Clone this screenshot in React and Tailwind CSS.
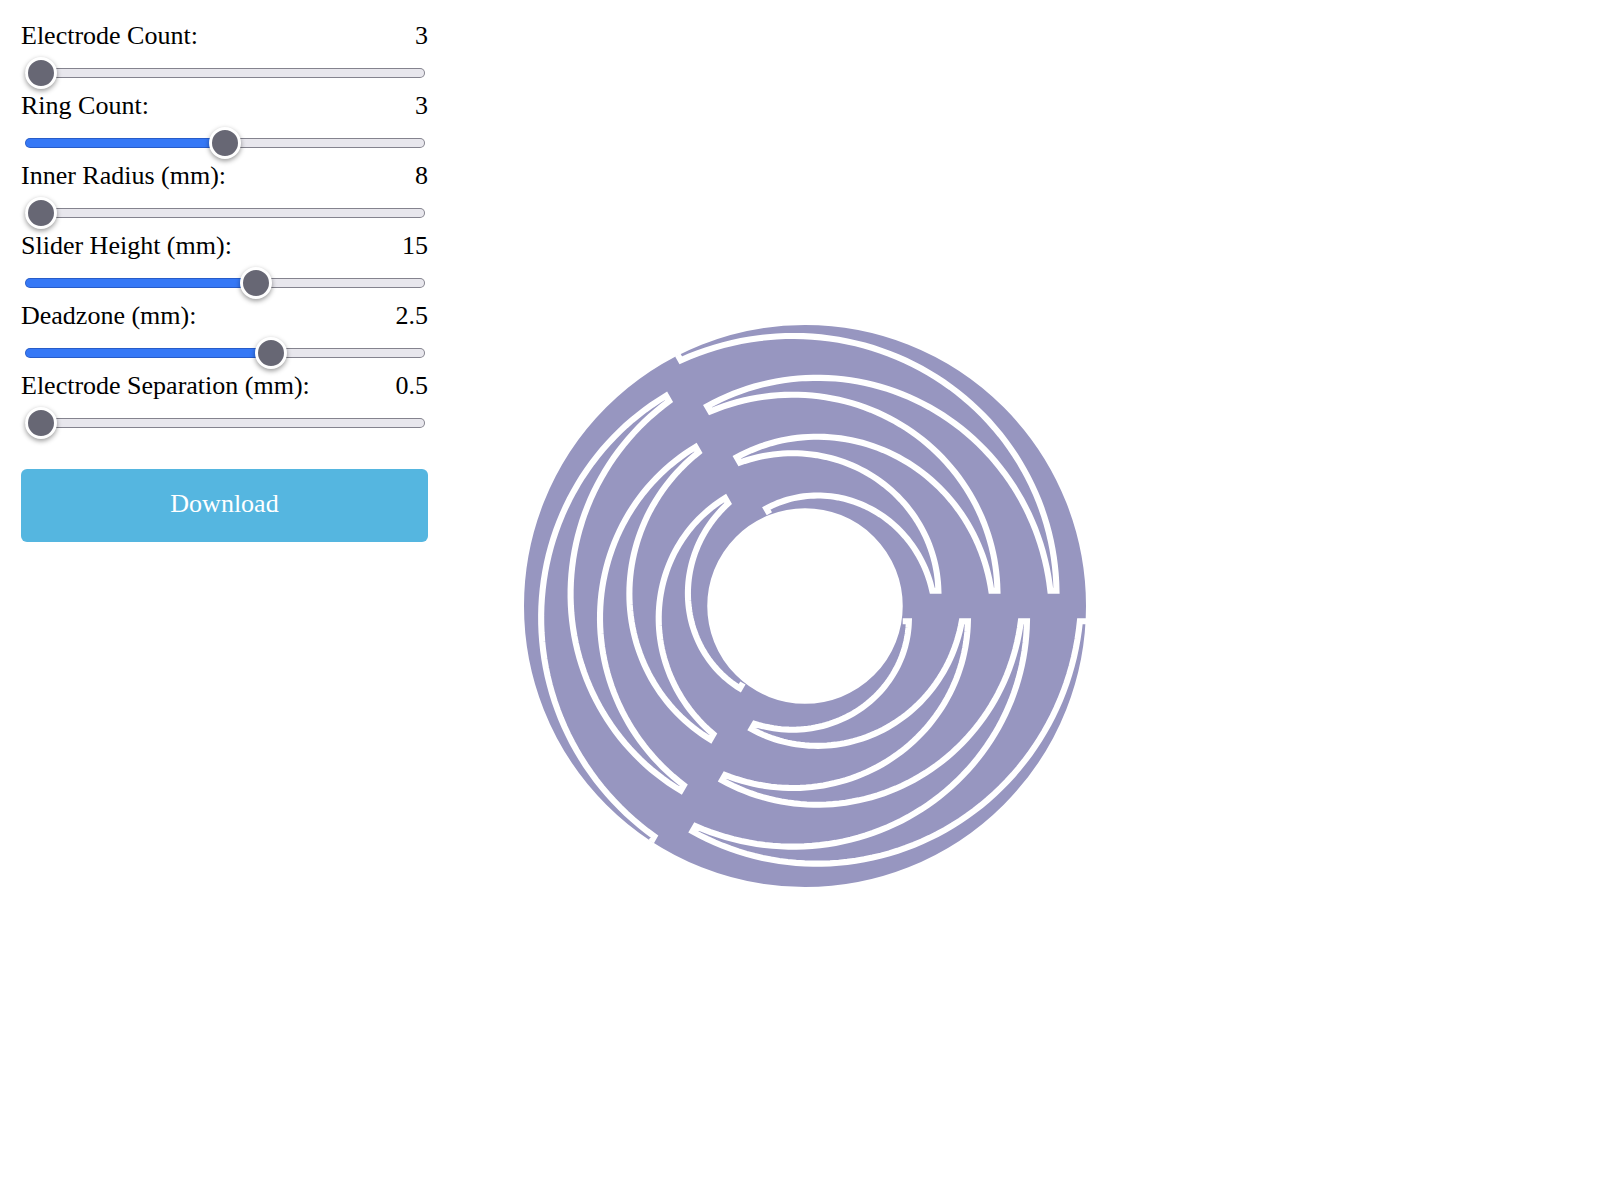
import React, { useState } from 'react';

const CONTROLS = [
  { id: 'electrodes', label: 'Electrode Count:', min: 3, max: 8, step: 1 },
  { id: 'rings', label: 'Ring Count:', min: 1, max: 5, step: 1 },
  { id: 'innerRadius', label: 'Inner Radius (mm):', min: 8, max: 20, step: 1 },
  { id: 'height', label: 'Slider Height (mm):', min: 8, max: 20, step: 1 },
  { id: 'deadzone', label: 'Deadzone (mm):', min: 0, max: 4, step: 0.5 },
  { id: 'separation', label: 'Electrode Separation (mm):', min: 0.5, max: 2, step: 0.1 },
];

const DEFAULTS = {
  electrodes: 3,
  rings: 3,
  innerRadius: 8,
  height: 15,
  deadzone: 2.5,
  separation: 0.5,
};

const CURVE_STEPS = 60;

// --- Two Layers: Fill Inside The Border, Darker Shade Under The Border ---
const trackBackground = (ratio) => {
  const stop = `calc(16px + (100% - 32px) * ${ratio})`;
  const layer = (on, off, box) =>
    `linear-gradient(to right, ${on} ${ratio ? stop : '0'}, ${off} ${ratio ? stop : '0'}) ${box}`;

  return [
    layer('#3578f6', '#e8e7ed', 'padding-box'),
    layer('#285cc8', '#84838e', 'border-box'),
  ].join(', ');
};

const SliderControl = ({ id, label, min, max, step, value, onChange }) => (
  <div>
    <div className="flex justify-between text-[26px] leading-[30px]">
      <label htmlFor={id}>{label}</label>
      <output htmlFor={id}>{value}</output>
    </div>
    <div className="flex pt-[17px] pr-[3px] pb-[13px] pl-1">
      <input
        id={id}
        type="range"
        min={min}
        max={max}
        step={step}
        value={value}
        onChange={(e) => onChange(id, Number(e.target.value))}
        style={{ background: trackBackground((value - min) / (max - min)) }}
        className="h-[10px] w-full cursor-pointer appearance-none rounded-full border border-transparent [&::-webkit-slider-runnable-track]:-mx-px [&::-webkit-slider-runnable-track]:h-2 [&::-webkit-slider-thumb]:-mt-3 [&::-webkit-slider-thumb]:size-8 [&::-webkit-slider-thumb]:appearance-none [&::-webkit-slider-thumb]:rounded-full [&::-webkit-slider-thumb]:border-3 [&::-webkit-slider-thumb]:border-white [&::-webkit-slider-thumb]:bg-[#676774] [&::-webkit-slider-thumb]:shadow-[0_2px_5px_rgba(0,0,0,0.4)]"
      />
    </div>
  </div>
);

// --- Zigzag Gap Between Two Neighbouring Electrodes, In Millimetres ---
const gapPath = ({ electrodes, rings, innerRadius, height, deadzone, separation }) => {
  const angle = (2 * Math.PI) / electrodes;
  const half = separation / 2;
  const pitch = (height - separation) / rings;
  const base = innerRadius + half;

  const startPoint = (r) => [r, deadzone / 2];
  const endPoint = (r) => [
    r * Math.cos(angle) + (deadzone / 2) * Math.sin(angle),
    r * Math.sin(angle) - (deadzone / 2) * Math.cos(angle),
  ];

  // The radius changes evenly with the angle from one point to the other
  const spiral = ([x1, y1], [x2, y2]) => {
    const r1 = Math.hypot(x1, y1);
    const r2 = Math.hypot(x2, y2);
    const a1 = Math.atan2(y1, x1);
    const a2 = Math.atan2(y2, x2);
    return Array.from({ length: CURVE_STEPS + 1 }, (_, i) => {
      const t = i / CURVE_STEPS;
      const r = r1 + (r2 - r1) * t;
      const a = a1 + (a2 - a1) * t;
      return [r * Math.cos(a), r * Math.sin(a)];
    });
  };

  const points = [endPoint(innerRadius)];
  for (let i = 0; i < rings; i++) {
    const low = base + i * pitch;
    const mid = low + pitch / 2;
    const high = low + pitch;
    points.push(
      ...spiral(endPoint(low + half), startPoint(mid - half)),
      ...spiral(startPoint(mid + half), endPoint(high - half))
    );
  }
  points.push(endPoint(innerRadius + height));

  return 'M' + points.map(([x, y]) => `${x.toFixed(3)} ${(-y).toFixed(3)}`).join('L');
};

const TouchWheel = ({ params }) => {
  const { electrodes, innerRadius, height, separation } = params;
  const outer = innerRadius + height;
  const d = gapPath(params);

  return (
    <svg
      viewBox={`${-outer} ${-outer} ${outer * 2} ${outer * 2}`}
      className="mt-[31px] w-[562px]"
      role="img"
      aria-label="Touch wheel preview"
    >
      <circle r={innerRadius + height / 2} fill="none" stroke="#9796c0" strokeWidth={height} />
      {Array.from({ length: electrodes }, (_, i) => (
        <path
          key={i}
          d={d}
          transform={`rotate(${(360 / electrodes) * i})`}
          fill="none"
          stroke="white"
          strokeWidth={separation}
        />
      ))}
    </svg>
  );
};

const App = () => {
  const [params, setParams] = useState(DEFAULTS);

  const handleChange = (id, value) => {
    setParams((prev) => ({ ...prev, [id]: value }));
  };

  return (
    <div className="grid min-h-screen grid-cols-[1fr_auto_1fr] items-center bg-white pr-[11px] pl-[21px] font-['Liberation_Serif',serif] text-black">
      <aside className="w-[407px] self-start pt-[21px]">
        {CONTROLS.map((control) => (
          <SliderControl
            key={control.id}
            {...control}
            value={params[control.id]}
            onChange={handleChange}
          />
        ))}
        <button
          type="button"
          className="mt-7 h-[73px] w-full cursor-pointer rounded-md bg-[#55b6e0] pb-[3px] text-[26px] leading-[30px] text-white"
        >
          Download
        </button>
      </aside>
      <TouchWheel params={params} />
    </div>
  );
};

export default App;
